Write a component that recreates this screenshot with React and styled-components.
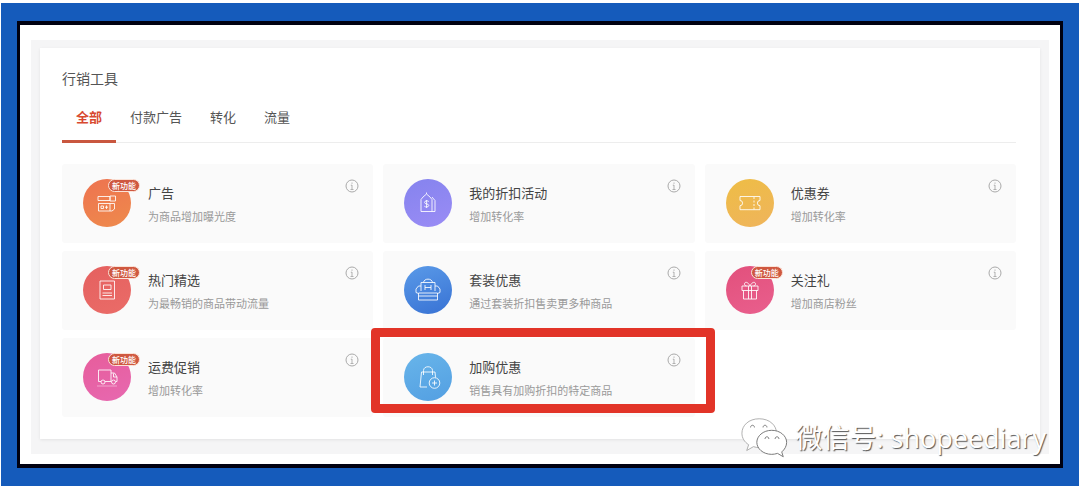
import React, { useState } from 'react'
import styled, { createGlobalStyle } from 'styled-components'

const tabs = ['全部', '付款广告', '转化', '流量']

const tools = [
  { name: '广告', text: '为商品增加曝光度', icon: 'ads', from: '#ee7350', to: '#ee8a4c', isNew: true },
  { name: '我的折扣活动', text: '增加转化率', icon: 'tag', from: '#8583ee', to: '#9a8cf5' },
  { name: '优惠券', text: '增加转化率', icon: 'ticket', from: '#eebd45', to: '#efb45c' },
  { name: '热门精选', text: '为最畅销的商品带动流量', icon: 'picks', from: '#e5605f', to: '#ea6c68', isNew: true },
  { name: '套装优惠', text: '通过套装折扣售卖更多种商品', icon: 'bundle', from: '#5a9ae8', to: '#3872d4' },
  { name: '关注礼', text: '增加商店粉丝', icon: 'gift', from: '#e2507c', to: '#e95f8d', isNew: true },
  { name: '运费促销', text: '增加转化率', icon: 'truck', from: '#e75d9b', to: '#e768b0', isNew: true },
  { name: '加购优惠', text: '销售具有加购折扣的特定商品', icon: 'addon', from: '#68b5ea', to: '#539fe2', marked: true },
]

const icons = {
  ads: (
    <>
      <path d="M7 9.500h12v4H7zM19 9h5.500v5H19zM7.500 16.500H19V24H7.500zM19 16.500h4.500V22L21 24h-2" />
      <path d="M10 19h2.500v2.500H10zM15.500 18.500v3.500M14 20.200h3" />
    </>
  ),
  tag: (
    <>
      <path d="M9 24.500V12.500l2-2.500 3.500-3 3.500 3 2 2.500v12z" />
      <path d="M20 10l3 3.500v11h-3M14.500 7V5.500" />
      <path d="M16.800 14.500c-1-1-4.300-1-4.300.9 0 2.100 4.300 1 4.300 3 0 1.800-3.300 2-4.500.8M14.600 13v8" />
    </>
  ),
  ticket: (
    <>
      <path d="M6 9.500h20v4a2.600 2.600 0 0 0 0 5.200v4H6v-4a2.600 2.600 0 0 0 0-5.200z" />
      <path d="M20 10v12.500" strokeDasharray="2 1.500" />
    </>
  ),
  picks: (
    <>
      <path d="M9 7h14.500v18H9z" />
      <path d="M12.500 11h7.500v4.500h-7.500zM11.500 19H21M11.500 21.500H21" />
    </>
  ),
  bundle: (
    <>
      <path d="M9 17V8.500h14V17M6.500 19h19v7h-19zM9 12H6.500L4 15v3.500l2.500 1M23 12h2.500l2.500 3v3.500l-2.500 1" />
      <path d="M11.500 8.500C12 4 20 4 20.500 8.500M13 11v5M19 11v5M13 13.500h6M6.500 22h19" />
    </>
  ),
  gift: (
    <>
      <path d="M8 12h16v4.500H8zM9.500 16.500V25h13v-8.500M14.500 12v13M17.500 12v13" />
      <path d="M16 12c-2-4.500-5.500-4.500-5.500-2 0 1.200 1 2 2 2M16 12c2-4.500 5.500-4.500 5.500-2 0 1.200-1 2-2 2" />
    </>
  ),
  truck: (
    <>
      <path d="M10 20.500H7.500V9h12.500v11.500h-6M20 12h3.500l2.500 4v4.500h-1M22.500 12.500v3.500H26" />
      <circle cx="12" cy="21" r="2" />
      <circle cx="22.500" cy="21" r="2" />
      <path d="M6 25h20" opacity="0.5" />
    </>
  ),
  addon: (
    <>
      <path d="M15 26H8l1.500-15H23l.5 5.500M11.500 14V9.500c0-5 9-5 9 0V14" />
      <circle cx="22.500" cy="22" r="5.300" />
      <path d="M22.500 19.500v5M20 22h5" />
    </>
  ),
}

function InfoIcon() {
  return (
    <svg width="14" height="14" viewBox="0 0 14 14" fill="none" stroke="#aaa">
      <circle cx="7" cy="7" r="6" />
      <path d="M7 3.500v1.300M7 6v4.500M5.800 6.200H7M5.500 10.500h3" strokeWidth="0.900" />
    </svg>
  )
}

function ChatLogo() {
  return (
    <svg width="50" height="42" viewBox="0 0 52 42" fill="#fff" stroke="#777" strokeWidth="1">
      <path
        d="M20 1C9 1 2 8 2 16c0 5 2.500 9 7 12l-2 6 7-4c2 .6 4 1 6 1 11 0 18-7 18-15S31 1 20 1z"
        stroke="#999"
        strokeOpacity="0.800"
      />
      <path d="M33 13c-9 0-15.500 6-15.500 12.500S24 38 33 38c2 0 4-.4 6-1l6 3.500-1.600-5c3-2.500 5.100-6 5.100-10C48.500 19 42 13 33 13z" />
      <path d="M11 10c0-3 4-3 4 0M24 10c0-3 4-3 4 0M26 22c0-3 4-3 4 0M36.500 22c0-3 4-3 4 0" fill="none" />
    </svg>
  )
}

function ToolCard({ tool }) {
  return (
    <Card>
      <Badge $from={tool.from} $to={tool.to}>
        <svg width="32" height="32" viewBox="0 0 32 32" fill="none" stroke="#fff" strokeOpacity="0.850" strokeLinejoin="round">
          {icons[tool.icon]}
        </svg>
        {tool.isNew && <NewLabel>新功能</NewLabel>}
      </Badge>
      <CardBody>
        <CardTitle>{tool.name}</CardTitle>
        <CardText>{tool.text}</CardText>
      </CardBody>
      <InfoButton aria-label={tool.name + '说明'}>
        <InfoIcon />
      </InfoButton>
      {tool.marked && <Marker />}
    </Card>
  )
}

function App() {
  const [active, setActive] = useState('全部')

  return (
    <Page>
      <GlobalStyle />
      <Frame>
        <Sheet>
          <Backdrop>
            <Panel>
              <Heading>行销工具</Heading>
              <TabBar role="tablist">
                {tabs.map((tab) => (
                  <Tab
                    key={tab}
                    role="tab"
                    aria-selected={tab === active}
                    $active={tab === active}
                    onClick={() => setActive(tab)}
                  >
                    {tab}
                  </Tab>
                ))}
              </TabBar>
              <Grid>
                {tools.map((tool) => (
                  <ToolCard key={tool.name} tool={tool} />
                ))}
              </Grid>
            </Panel>
          </Backdrop>
        </Sheet>
        <Watermark>
          <ChatLogo />
          <span>微信号: shopeediary</span>
        </Watermark>
      </Frame>
    </Page>
  )
}

export default App

const GlobalStyle = createGlobalStyle`
  * {
    box-sizing: border-box;
  }

  body {
    margin: 0;
    background: #fff;
    font-family: "Noto Sans CJK SC", "Noto Sans", sans-serif;
    color: #555;
  }

  button {
    font-family: inherit;
    cursor: pointer;
  }
`

const Page = styled.div`
  padding: 3px 1px;
`

const Frame = styled.div`
  position: relative;
  padding: 18px 16px;
  background: #155bbb;
`

const Sheet = styled.div`
  padding: 15px 11px 10px;
  border: solid #000010;
  border-width: 4px 3px;
  background: #fff;
`

const Backdrop = styled.div`
  padding: 8px 9px 15px;
  background: #f5f5f6;
`

const Panel = styled.main`
  padding: 20px 24px 22px 22px;
  background: #fff;
  box-shadow: 0 1px 3px rgba(0, 0, 0, 0.08);
`

const Heading = styled.h1`
  margin: 0 0 4px;
  font-size: 14px;
  font-weight: 400;
  line-height: 20px;
`

const TabBar = styled.div`
  display: flex;
  box-shadow: inset 0 -1px #ededed;
`

const Tab = styled.button`
  height: 51px;
  padding: 0 14px;
  border: 0;
  border-bottom: 3px solid ${(p) => (p.$active ? '#c9573f' : 'transparent')};
  background: none;
  color: ${(p) => (p.$active ? '#d8492f' : '#555')};
  font-size: 13px;
  font-weight: ${(p) => (p.$active ? 700 : 400)};
`

const Grid = styled.div`
  display: grid;
  grid-template-columns: repeat(3, 1fr);
  gap: 8px 10px;
  margin-top: 21px;
`

const Card = styled.section`
  position: relative;
  display: flex;
  align-items: flex-start;
  padding: 15px 14px 16px 21px;
  border-radius: 3px;
  background: #fafafa;
`

const Badge = styled.div`
  position: relative;
  display: flex;
  align-items: center;
  justify-content: center;
  width: 48px;
  height: 48px;
  border-radius: 50%;
  background: linear-gradient(160deg, ${(p) => p.$from}, ${(p) => p.$to});
`

const NewLabel = styled.span`
  position: absolute;
  top: 0;
  left: 25px;
  padding: 0 3px;
  border: 1px solid #fbe3d8;
  border-radius: 7px;
  background: #cf5840;
  color: #fff;
  font-size: 8px;
  font-weight: 500;
  line-height: 11px;
  white-space: nowrap;
`

const CardBody = styled.div`
  flex: 1;
  margin-left: 17px;
`

const CardTitle = styled.h2`
  margin: 4px 0 5px;
  font-size: 13px;
  font-weight: 400;
  line-height: 20px;
  color: #444;
`

const CardText = styled.p`
  margin: 0;
  font-size: 11px;
  line-height: 16px;
  color: #999;
`

const InfoButton = styled.button`
  display: flex;
  padding: 0;
  border: 0;
  background: none;
`

// highlight box, reaches past the card edges
const Marker = styled.div`
  position: absolute;
  inset: -10px -20px 4px -12px;
  border: 9px solid #e23428;
  border-radius: 4px;
  pointer-events: none;
`

const Watermark = styled.div`
  position: absolute;
  right: 33px;
  bottom: 27px;
  display: flex;
  align-items: center;
  gap: 5px;
  color: #fff;
  font-family: "Open Sans", "Noto Sans CJK SC", sans-serif;
  font-size: 27px;
  font-weight: 400;
  line-height: 42px;
  text-shadow: 1px 1px 1px #555;
  white-space: nowrap;
`
